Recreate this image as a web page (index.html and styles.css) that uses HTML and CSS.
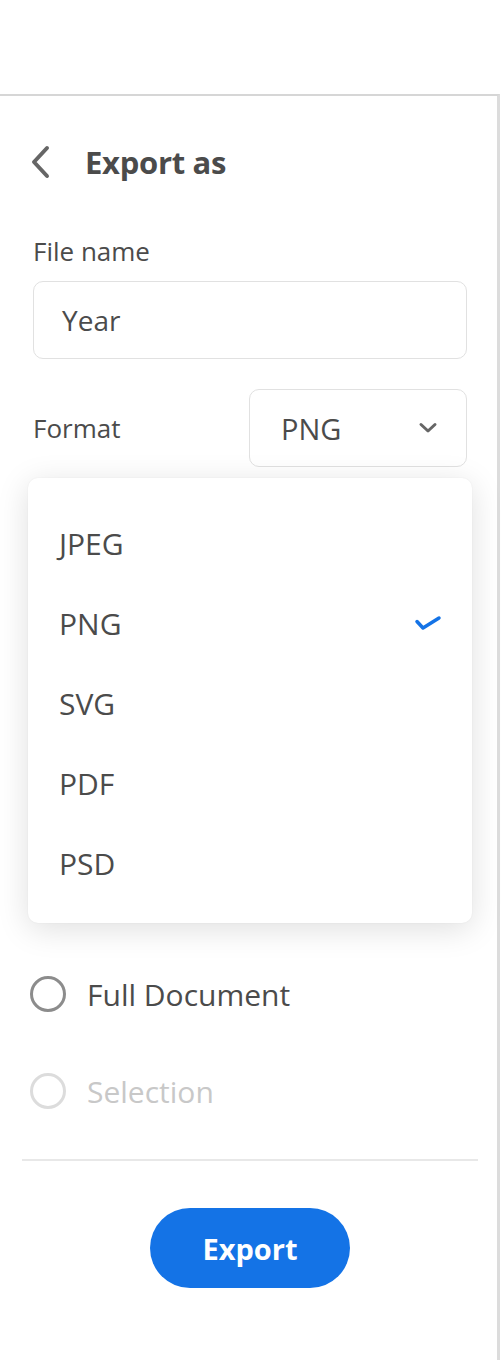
FILE: index.html
```html
<!DOCTYPE html>
<html lang="en">
<head>
<meta charset="utf-8">
<title>Export as</title>
<link rel="stylesheet" href="styles.css">
</head>
<body>
<div class="topbar"></div>
<div class="panel">
  <div class="header">
    <svg class="back" width="24" height="36" viewBox="0 0 24 36" aria-hidden="true">
      <path d="M19 4 L6 18 L19 32" fill="none" stroke="#666" stroke-width="4" stroke-linecap="round" stroke-linejoin="round"/>
    </svg>
    <h1 class="title">Export as</h1>
  </div>
  <div class="form">
    <label class="label file-label">File name</label>
    <div class="input">Year</div>
    <div class="format-row">
      <span class="label">Format</span>
      <div class="select">
        <span>PNG</span>
        <svg width="20" height="12" viewBox="0 0 20 12" aria-hidden="true">
          <path d="M3 2.5 L10 9 L17 2.5" fill="none" stroke="#666" stroke-width="3" stroke-linecap="round" stroke-linejoin="round"/>
        </svg>
      </div>
      <ul class="menu">
        <li class="menu-item">JPEG</li>
        <li class="menu-item">PNG
          <svg class="check" width="28" height="18" viewBox="0 0 28 18" aria-hidden="true">
            <path d="M3 7.5 L9 14 L25 4" fill="none" stroke="#1473e6" stroke-width="3.5" stroke-linecap="round" stroke-linejoin="round"/>
          </svg>
        </li>
        <li class="menu-item">SVG</li>
        <li class="menu-item">PDF</li>
        <li class="menu-item">PSD</li>
      </ul>
    </div>
    <div class="radios">
      <div class="radio"><span class="circle"></span><span>Full Document</span></div>
      <div class="radio disabled"><span class="circle"></span><span>Selection</span></div>
    </div>
    <div class="divider"></div>
    <div class="actions">
      <button class="export">Export</button>
    </div>
  </div>
</div>
</body>
</html>
```
FILE: styles.css
```css
html, body {
  margin: 0;
  padding: 0;
  background: #fff;
}
body {
  font-family: "Open Sans", "Noto Sans", sans-serif;
  color: #4b4b4b;
}
.topbar {
  height: 94px;
}
.panel {
  width: 500px;
  height: 1266px;
  box-sizing: border-box;
  border-top: 2px solid #d6d6d6;
  border-right: 3px solid #dcdcdc;
}
.header {
  display: flex;
  align-items: center;
  height: 44px;
  margin-top: 44px;
  padding-left: 28px;
}
.back {
  display: block;
}
.title {
  margin: 0 0 0 33px;
  font-size: 31px;
  font-weight: 700;
  color: #4b4b4b;
  letter-spacing: -0.3px;
}
.form {
  padding: 0 30px 0 33px;
}
.label {
  display: block;
  font-size: 26px;
  line-height: 30px;
}
.file-label {
  margin-top: 52px;
  margin-bottom: 15px;
}
.input {
  height: 78px;
  box-sizing: border-box;
  border: 1.5px solid #e1e1e1;
  border-radius: 10px;
  display: flex;
  align-items: center;
  padding-left: 28px;
  font-size: 28px;
}
.format-row {
  position: relative;
  display: flex;
  align-items: center;
  justify-content: space-between;
  margin-top: 30px;
}
.select {
  width: 218px;
  height: 78px;
  box-sizing: border-box;
  border: 1.5px solid #e1e1e1;
  border-radius: 10px;
  display: flex;
  align-items: center;
  justify-content: space-between;
  padding: 0 28px 0 31px;
  font-size: 29px;
}
.select svg {
  display: block;
}
.menu {
  position: absolute;
  top: calc(100% + 11px);
  left: -5px;
  right: -5px;
  margin: 0;
  padding: 25px 0 20px;
  list-style: none;
  background: #fff;
  border-radius: 10px;
  box-shadow: 0 6px 32px rgba(0, 0, 0, 0.13), 0 0 2px rgba(0, 0, 0, 0.06);
  z-index: 2;
}
.menu-item {
  height: 80px;
  display: flex;
  align-items: center;
  justify-content: space-between;
  padding: 0 30px 0 31px;
  font-size: 30px;
}
.check {
  display: block;
}
.radios {
  margin-top: 503px;
  display: flex;
  flex-direction: column;
  gap: 49px;
}
.radio {
  height: 48px;
  display: flex;
  align-items: center;
  gap: 21px;
  margin-left: -3px;
  font-size: 30px;
}
.circle {
  width: 36px;
  height: 36px;
  flex: none;
  box-sizing: border-box;
  border: 3.5px solid #8c8c8c;
  border-radius: 50%;
}
.radio.disabled {
  color: #c8c8c8;
}
.radio.disabled .circle {
  border-color: #dcdcdc;
}
.divider {
  height: 2px;
  background: #e8e8e8;
  margin: 44px -11px 0;
}
.actions {
  display: flex;
  justify-content: center;
  margin-top: 47px;
}
.export {
  width: 200px;
  height: 80px;
  border: none;
  border-radius: 40px;
  background: #1473e6;
  color: #fff;
  font-family: "Open Sans", "Noto Sans", sans-serif;
  font-size: 29px;
  font-weight: 700;
  padding: 0;
}
```
